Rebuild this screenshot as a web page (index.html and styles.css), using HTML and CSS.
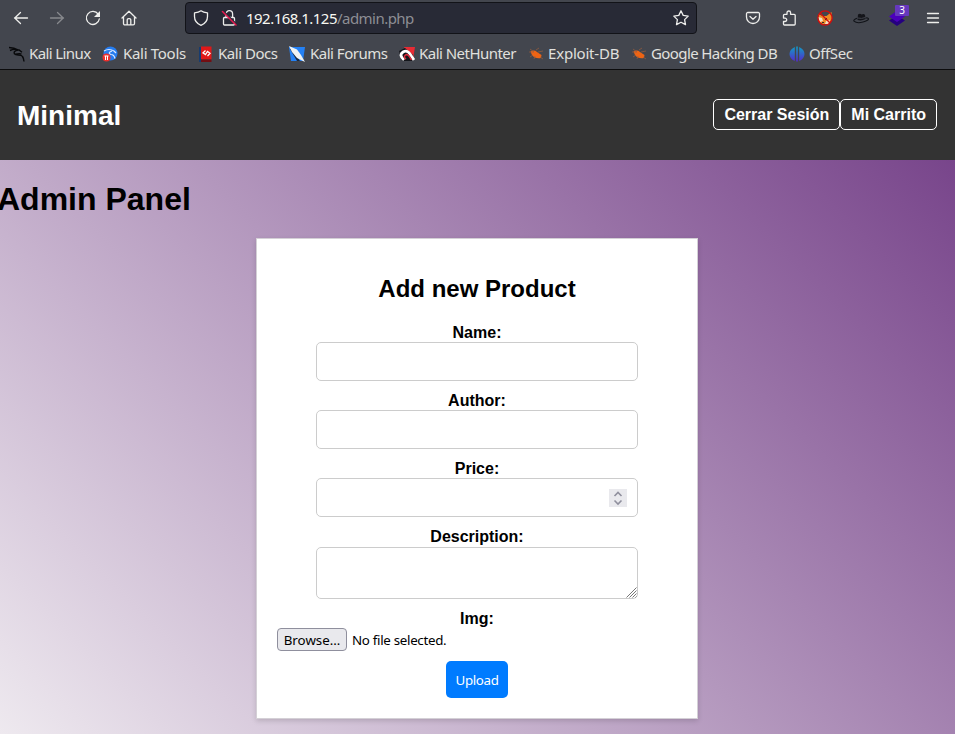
FILE: index.html
```html
<!DOCTYPE html>
<html lang="es">
<head>
<meta charset="utf-8">
<title>Admin Panel</title>
<link rel="stylesheet" href="styles.css">
</head>
<body>
<div class="chrome">
  <div class="toolbar">
    <div class="nav-icons">
      <svg class="ic" viewBox="0 0 16 16"><path d="M14.500 8H1.500M7.500 2.500 1.800 8l5.700 5.500"/></svg>
      <svg class="ic dim" viewBox="0 0 16 16"><path d="M1.500 8h13M8.500 2.500 14.200 8l-5.700 5.500"/></svg>
      <svg class="ic" viewBox="0 0 16 16"><path d="M13.200 4.200A6.500 6.500 0 1 0 14.300 9"/><path class="solid" d="M15 1v6H9z"/></svg>
      <svg class="ic" viewBox="0 0 16 16"><path d="M1 8 8 1.300 15 8M2.500 7v6.500a1.300 1.300 0 0 0 1.300 1.300h8.400a1.300 1.300 0 0 0 1.300-1.300V7M6.200 14.500V10a1.300 1.300 0 0 1 1.300-1.300h1A1.300 1.300 0 0 1 9.800 10v4.500"/></svg>
    </div>
    <div class="urlbar">
      <svg class="ic" viewBox="0 0 16 16"><path d="M8 .8C6.500 2 4 2.700 1.500 2.800v3.700c0 3.600 2.500 7.200 6.500 8.900 4-1.700 6.500-5.300 6.500-8.900V2.800C12 2.700 9.500 2 8 .8z"/></svg>
      <svg class="ic lock" viewBox="0 0 16 16"><path d="M5 7V4a3.300 3.300 0 0 1 6.600 0v3M3.500 7.500h9a1 1 0 0 1 1 1V14a1 1 0 0 1-1 1h-9a1 1 0 0 1-1-1V8.500a1 1 0 0 1 1-1z"/><path class="gap" d="m2.500 1 13 13"/><path class="slash" d="m1.500 1.500 13.500 13.500"/></svg>
      <span class="url">192.168.1.125<span class="path">/admin.php</span></span>
      <svg class="ic star" viewBox="0 0 16 16"><path d="m8 .8 2.200 4.600 5 .7-3.600 3.500.9 5L8 12.200l-4.500 2.400.9-5L.8 6.100l5-.7z"/></svg>
    </div>
    <div class="ext-icons">
      <svg class="ic" viewBox="0 0 16 16"><path d="M2.800 2.500h10.400a1.300 1.300 0 0 1 1.300 1.300V7a6.500 6.500 0 0 1-13 0V3.800a1.300 1.300 0 0 1 1.300-1.300z"/><path d="M5 6.500 8 9.300l3-2.800"/></svg>
      <svg class="ic" viewBox="0 0 16 16"><path d="M6 4.300V2.800a1.800 1.800 0 0 1 3.600 0v1.500h3.600a1 1 0 0 1 1 1V14a1 1 0 0 1-1 1H3.500a1 1 0 0 1-1-1v-2.500H4a1.700 1.700 0 0 0 0-3.400H2.500V5.300a1 1 0 0 1 1-1z"/></svg>
      <svg class="pic" viewBox="0 0 16 16"><path fill="#ef8a25" d="m1.500 4 4 2h4l5-4 .5 7-3 5H6l-4-2z"/><path fill="#f3dfc4" d="m1 7 4 1 1 3-3 1zM9 11l4-1-1 4H8z"/><path fill="#332b29" d="M8 8h2v2H8zM5 12h2v1H5z"/><circle cx="8" cy="8" r="7.100" fill="none" stroke="#d50d0d" stroke-width="1.300"/><path d="m3 3 10 10" stroke="#d50d0d" stroke-width="1.300"/></svg>
      <svg class="pic" viewBox="0 0 16 16"><path fill="none" stroke="#111318" stroke-width="1.100" d="M4 8.300Q0 9.800 1 11.200q3 2.500 9 .8 5.500-1.500 5.500-3.200 0-1-3-1"/><path fill="#14151a" d="M4.500 10 5 4.500q2-1.500 3.500 0 2.500-1.200 3.500.5l.5 4q-4 2.200-8 1z"/><path d="M4.500 8q4 1 8-.5" stroke="#41444c" fill="none"/></svg>
      <span class="stack"><svg class="pic" viewBox="0 0 16 16"><path fill="#260080" d="m8 5.500 8 5L8 16l-8-5.500z"/><path fill="#4b00bb" d="m8 .8 8 5.700-8 5.500-8-5.500z"/></svg><b class="badge">3</b></span>
      <svg class="ic" viewBox="0 0 16 16"><path d="M2.500 3.500h11M2.500 8h11M2.500 12.500h11"/></svg>
    </div>
  </div>
  <div class="bookmarks">
    <span class="bm kali"><svg viewBox="0 0 16 16"><path fill="none" stroke="#08090b" stroke-width="1.400" d="M0 1.500q5 .2 9.500 2.500M1 4.500q4-2 9-.5l3 2.300M9 4q-5 1-3.500 3.800C7 10 12 8 13.500 10.500q1.300 2 1.500 5M6 8.200q5-1 6.500-.2"/></svg><span>Kali Linux</span></span>
    <span class="bm tools"><svg viewBox="0 0 16 16"><circle cx="8.500" cy="7.500" r="7" fill="#257cf0"/><path d="M2 5q5-3 10 0l2 2M10 5Q5 7 9 8.500q3 0 4 4" fill="none" stroke="#dceaff" stroke-width="1.200"/><circle cx="4.500" cy="11.500" r="4" fill="#ed302d"/><path d="M2.500 10h4M3.500 10v4M5.500 10v4" stroke="#fff"/></svg><span>Kali Tools</span></span>
    <span class="bm docs"><svg viewBox="0 0 16 16"><path fill="#173c70" d="M1 1h3v15H1z"/><path fill="#e01818" d="M3 .5h10.500v13H3z"/><path fill="#730e13" d="M3 13.500h10.500V16H3z"/><path d="M7.500 4.500 5 6.800l2.500 1.700 2-3L12 7.300 9.500 10" fill="none" stroke="#fff" stroke-width="1.300"/></svg><span>Kali Docs</span></span>
    <span class="bm forums"><svg viewBox="0 0 16 16"><path fill="#2481f5" d="M0 1h16l-2 14H2z"/><path fill="#172840" d="m1 3 2 0 8 12H8z"/><path fill="#eef3f5" d="m0 0 8 3.500 4 5.500 4 7-8-4-5-6z"/></svg><span>Kali Forums</span></span>
    <span class="bm hunter"><svg viewBox="0 0 16 16"><path fill="#e82b34" d="m5 1 11 0-2 12-5-3z"/><path fill="#13151a" d="M0 5 6 2l8 7-1 6H3z"/><path d="M5 14Q-.5 9 4 6q4-2.500 7 2l4 6" fill="none" stroke="#fff" stroke-width="2.800"/><path d="M7 13q-3-2-.5-4t6 5" fill="none" stroke="#df2939" stroke-width="1.600"/></svg><span>Kali NetHunter</span></span>
    <span class="bm exploit"><svg viewBox="0 0 16 16"><path fill="#ee6414" d="M2.500 5.500Q6 3.500 9 6l4.500 3-.5 3Q7 13 4 9z"/><path d="M1 6h5L2 3M5 9l-3 2M8 4l3-2M10 6l5-1M7 10l-1 3M12 11l3 2" stroke="#9b5d3c" stroke-width=".7" fill="none"/></svg><span>Exploit-DB</span></span>
    <span class="bm google"><svg viewBox="0 0 16 16"><path fill="#ee6414" d="M2.500 5.500Q6 3.500 9 6l4.500 3-.5 3Q7 13 4 9z"/><path d="M1 6h5L2 3M5 9l-3 2M8 4l3-2M10 6l5-1M7 10l-1 3M12 11l3 2" stroke="#9b5d3c" stroke-width=".7" fill="none"/></svg><span>Google Hacking DB</span></span>
    <span class="bm offsec"><svg viewBox="0 0 16 16"><defs><linearGradient id="os" x1="0" y1="0" x2="0" y2="1"><stop offset="0" stop-color="#109dc4"/><stop offset="1" stop-color="#5429cf"/></linearGradient></defs><path fill="url(#os)" d="M5.800 1v14Q.5 12.500.5 8t5.300-7zM7.200.5h1.600v15H7.200zM10.200 1q5.300 2.500 5.300 7t-5.300 7z"/></svg><span>OffSec</span></span>
  </div>
</div>
<header class="site-header">
  <div class="brand">Minimal</div>
  <nav class="site-nav"><a>Cerrar Sesión</a><a>Mi Carrito</a></nav>
</header>
<main>
  <h1>Admin Panel</h1>
  <form class="card">
    <h2>Add new Product</h2>
    <label for="name">Name:</label>
    <input class="field" id="name" type="text">
    <label for="author">Author:</label>
    <input class="field" id="author" type="text">
    <label>Price:</label>
    <div class="field number"><svg viewBox="0 0 18 18"><path d="m5.500 7 3.500-3.500L12.500 7M5.500 11.500 9 15l3.500-3.500"/></svg></div>
    <label>Description:</label>
    <div class="field area"><svg viewBox="0 0 11 11"><path d="M.5 10.500l10-10M3.500 10.500l7-7M6.500 10.500l4-4M9.500 10.500l1-1"/></svg></div>
    <label>Img:</label>
    <div class="file"><span class="browse">Browse…</span><span class="none">No file selected.</span></div>
    <button class="upload" type="button">Upload</button>
  </form>
</main>
</body>
</html>
```
FILE: styles.css
```css
* { box-sizing: border-box; }
html, body { height: 100%; overflow: hidden; }
body { margin: 0; display: flex; flex-direction: column; font-family: "Liberation Sans", Arial, sans-serif; color: #000; }

/* Browser toolbar */
.chrome { height: 70px; flex: none; background: #43464e; border-bottom: 1px solid #0c0c0d; font-family: "Noto Sans", sans-serif; color: #e0e0de; }
.toolbar { height: 36px; display: flex; align-items: center; }
.ic { width: 16px; height: 16px; flex: none; fill: none; stroke: #eeeeec; stroke-width: 1.3; stroke-linejoin: round; stroke-linecap: round; }
.ic .solid { fill: #eeeeec; stroke: none; }
.ic .slash { stroke: #e6194f; stroke-width: 1.5; }
.ic .gap { stroke: #282a36; stroke-width: 1.5; }
.dim { opacity: .4; }
.pic { width: 16px; height: 16px; flex: none; display: block; }
.nav-icons { width: 185px; padding-left: 13px; display: flex; gap: 20px; }
.urlbar { width: 512px; height: 32px; display: flex; align-items: center; padding: 0 7px; background: #282a36; border: 1px solid #121318; border-radius: 4px; }
.lock { margin-left: 12px; }
.url { margin-left: 9px; font-size: 15px; line-height: 20px; letter-spacing: -.53px; color: #f8f8f2; }
.url .path { color: #8d8e94; }
.star { margin-left: auto; }
.ext-icons { margin-left: 48px; display: flex; gap: 20px; }
.stack { position: relative; width: 16px; height: 16px; }
.badge { position: absolute; left: 6px; top: -5px; width: 14px; height: 11px; background: #6638bd; color: #fff; font-weight: 400; font-size: 10px; line-height: 11px; text-align: center; border-radius: 1px; }
.bookmarks { height: 33px; display: flex; align-items: center; padding: 2px 0 0 9px; font-size: 15px; letter-spacing: -.53px; white-space: nowrap; }
.bm { display: flex; align-items: center; gap: 4px; flex: none; }
.bm span { line-height: 20px; padding-bottom: 2px; }
.bm svg { width: 16px; height: 16px; flex: none; }
.kali { width: 93px; letter-spacing: -.6px; }
.tools { width: 96px; gap: 5px; letter-spacing: -.3px; }
.docs { width: 91px; letter-spacing: -.47px; }
.forums { width: 110px; gap: 5px; letter-spacing: -.5px; }
.hunter { width: 129px; letter-spacing: -.53px; }
.exploit { width: 103px; letter-spacing: -.2px; }
.google { width: 158px; letter-spacing: -.6px; }
.offsec { letter-spacing: -.4px; }

/* Page */
.site-header { height: 90px; flex: none; display: flex; align-items: center; justify-content: space-between; padding: 0 18px 0 17px; background: #333; color: #fff; }
.brand { margin-top: 2px; font-size: 28px; font-weight: 700; line-height: 32px; }
.site-nav { display: flex; margin-top: -2px; font-weight: 700; font-size: 16px; }
.site-nav a { height: 31px; line-height: 29px; padding: 0 10px; border: 1px solid #fff; border-radius: 5px; }
main { flex: 1; min-height: 0; background: linear-gradient(45deg, #eee9ef, #78458b); }
h1 { margin: 21px 0 21px -3px; font-size: 32px; line-height: 36px; }
.card { width: 442px; height: 481px; margin: 0 auto 0 256px; padding: 36px 20px 20px; display: flex; flex-direction: column; align-items: center; background: #fff; border: 1px solid #d4d0d6; box-shadow: 0 2px 5px rgba(0,0,0,.15); }
h2 { margin: 0 0 21px; font-size: 24px; line-height: 27px; }
label { font-size: 16px; font-weight: 700; line-height: 19px; }
.field { width: 322px; height: 39px; flex: none; margin: 0 0 10px; border: 1px solid #ccc; border-radius: 5px; background: #fff; }
.number { display: flex; align-items: center; justify-content: flex-end; padding-right: 10px; }
.number svg { width: 18px; height: 18px; background: #e9e9ed; fill: none; stroke: #8f8f9d; stroke-width: 1.6; }
.area { height: 52px; margin-top: 1px; display: flex; align-items: flex-end; justify-content: flex-end; }
.area svg { width: 11px; height: 11px; fill: none; stroke: #777; stroke-width: 1; }
.file { width: 100%; height: 23px; display: flex; align-items: center; font: 13.33px "Noto Sans", sans-serif; letter-spacing: -.3px; }
.browse { width: 70px; height: 23px; line-height: 22px; text-align: center; letter-spacing: 0; background: #e9e9ed; border: 1px solid #8f8f9d; border-radius: 4px; }
.none { margin-left: 5px; }
.upload { width: 62px; height: 37px; margin: 10px 0 0; padding: 0; border: 0; border-radius: 5px; background: #007bff; color: #fff; font: 13.33px "Noto Sans", sans-serif; letter-spacing: -.35px; }
```
